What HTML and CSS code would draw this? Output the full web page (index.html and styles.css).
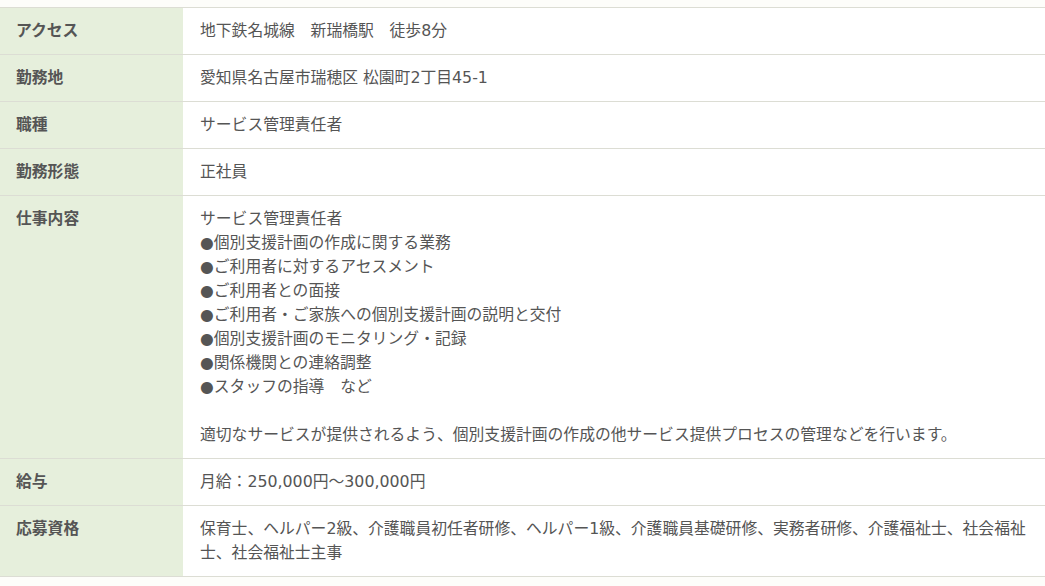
FILE: index.html
```html
<!DOCTYPE html>
<html lang="ja">
<head>
<meta charset="utf-8">
<link rel="stylesheet" href="styles.css">
</head>
<body>
<table class="info">
  <tr><th>アクセス</th><td>地下鉄名城線　新瑞橋駅　徒歩8分</td></tr>
  <tr><th>勤務地</th><td>愛知県名古屋市瑞穂区 松園町2丁目45-1</td></tr>
  <tr><th>職種</th><td>サービス管理責任者</td></tr>
  <tr><th>勤務形態</th><td>正社員</td></tr>
  <tr><th>仕事内容</th><td>サービス管理責任者<br>●個別支援計画の作成に関する業務<br>●ご利用者に対するアセスメント<br>●ご利用者との面接<br>●ご利用者・ご家族への個別支援計画の説明と交付<br>●個別支援計画のモニタリング・記録<br>●関係機関との連絡調整<br>●スタッフの指導　など<br><br>適切なサービスが提供されるよう、個別支援計画の作成の他サービス提供プロセスの管理などを行います。</td></tr>
  <tr><th>給与</th><td>月給：250,000円～300,000円</td></tr>
  <tr><th>応募資格</th><td>保育士、ヘルパー2級、介護職員初任者研修、ヘルパー1級、介護職員基礎研修、実務者研修、介護福祉士、社会福祉士、社会福祉士主事</td></tr>
</table>
</body>
</html>
```
FILE: styles.css
```css
html, body {
  margin: 0;
  padding: 0;
  background: #fdfdfa;
}
body {
  padding-top: 7px;
  font-family: "DejaVu Sans", "Noto Sans CJK JP", sans-serif;
  font-size: 15.8px;
  line-height: 24px;
  color: #555;
}
.info {
  width: 100%;
  border-collapse: collapse;
  border-top: 1px solid #dcddd4;
}
.info th, .info td {
  border-bottom: 1px solid #dcddd4;
  padding: 11px 17px 11px 17px;
  vertical-align: top;
  text-align: left;
}
.info th {
  width: 183px;
  box-sizing: border-box;
  padding-left: 16px;
  background: #e6efdc;
  font-weight: bold;
  color: #555;
}
.info td {
  background: #fff;
  font-weight: normal;
}
```
